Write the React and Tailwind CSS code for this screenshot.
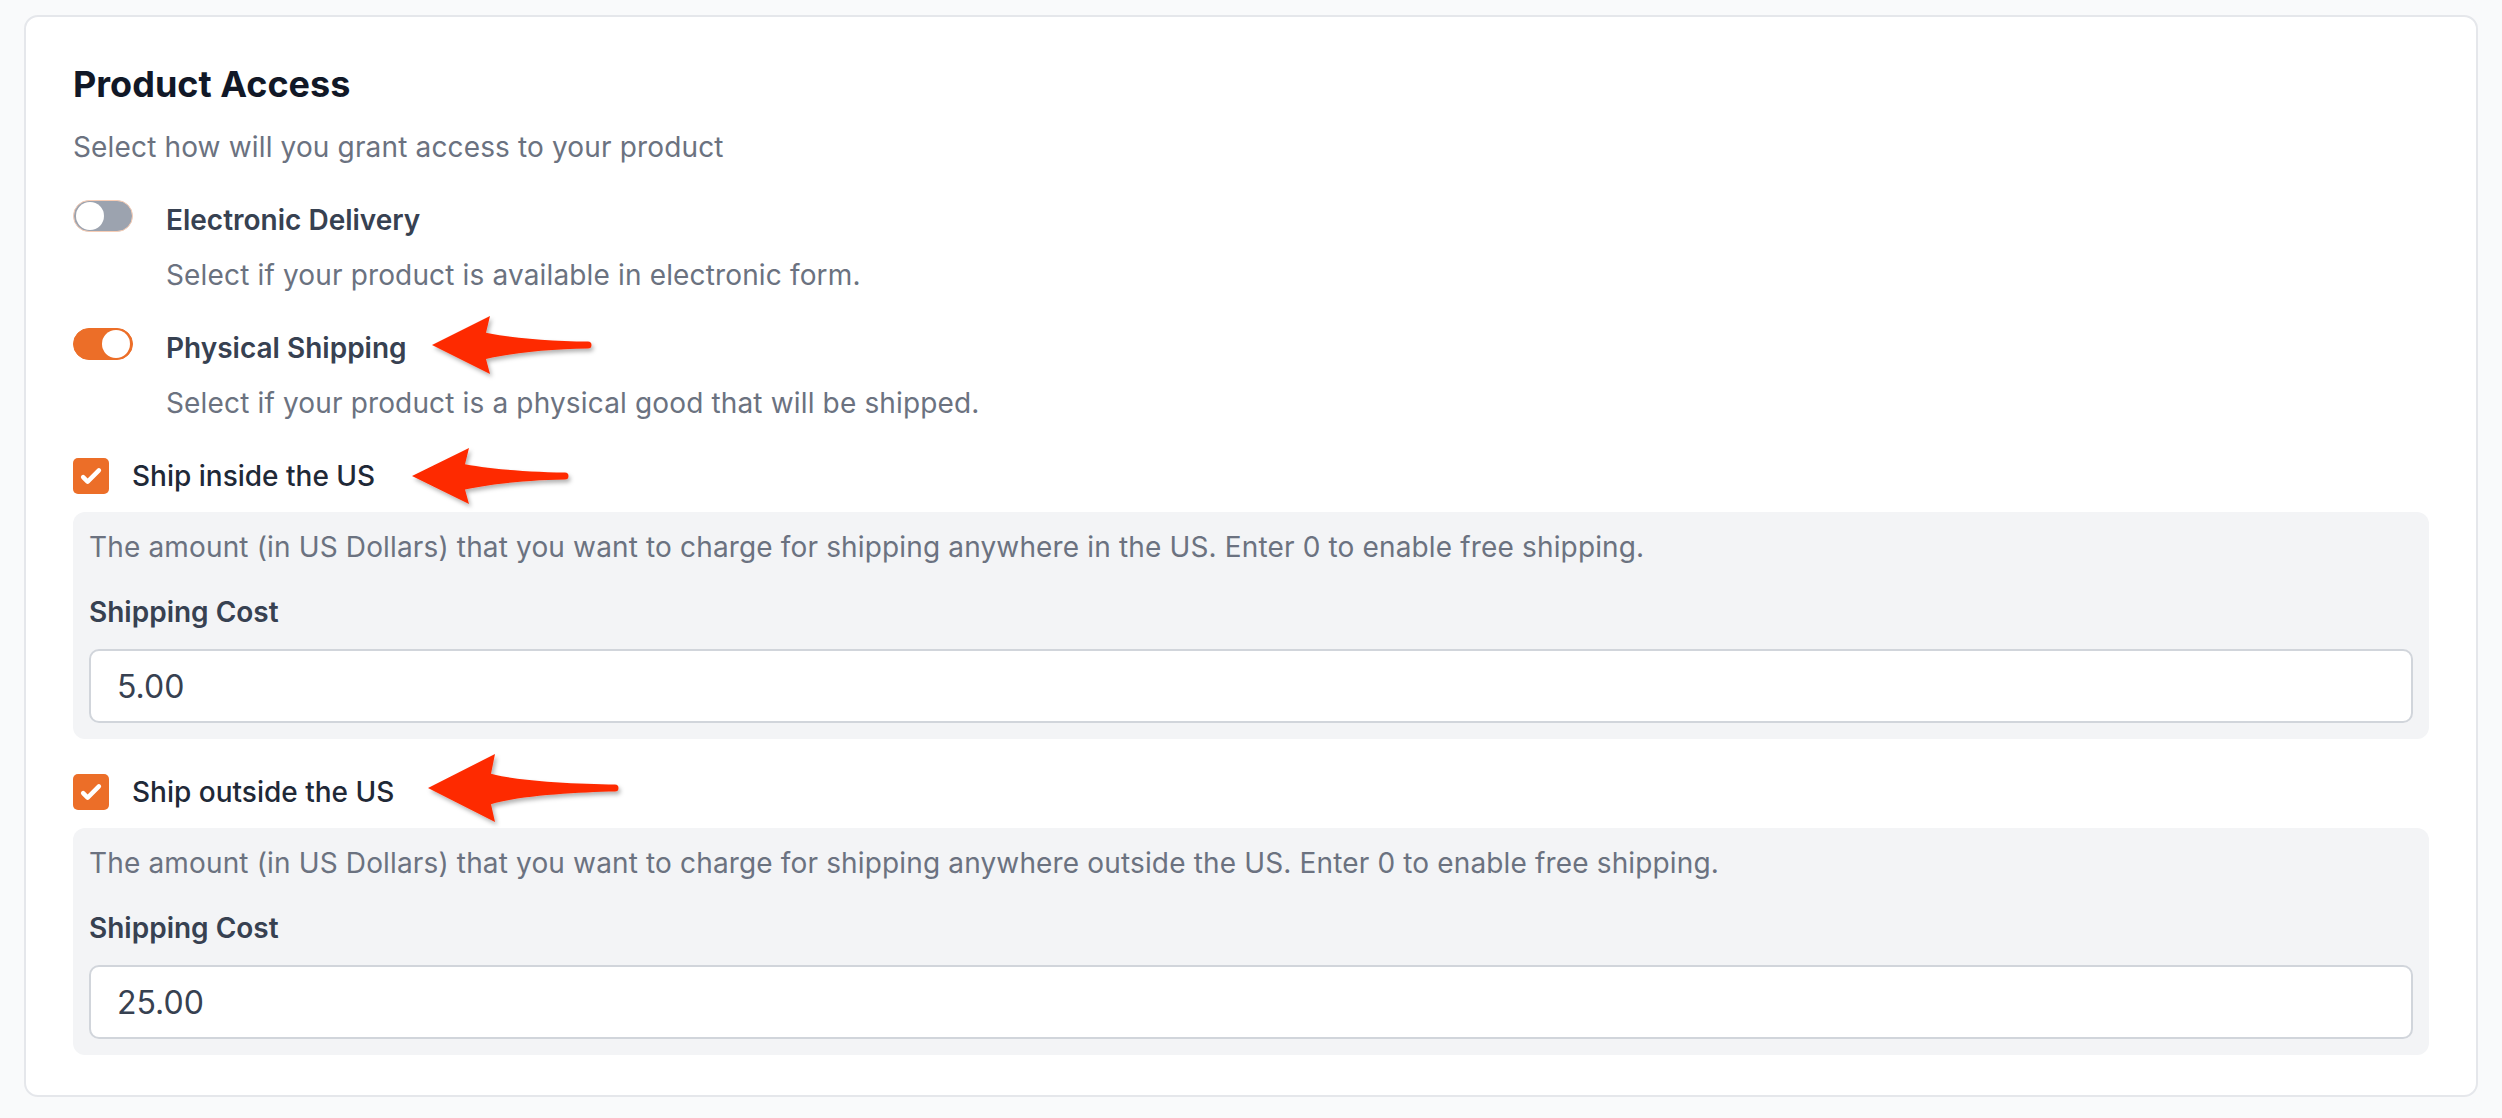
import React, { useState } from 'react';

const arrowPath = (x, y, len, h, hh) => {
  const nx = x + h - 4;
  const tx = x + len;
  return `M${x},${y} L${x + h},${y - hh} L${nx},${y - hh * 0.42} C${nx + 25},${y - 7} ${tx - 40},${y - 4} ${tx - 3},${y - 3.5} A3.5,3.5 0 0 1 ${tx - 3},${y + 3.5} C${tx - 40},${y + 4} ${nx + 25},${y + 8} ${nx},${y + hh * 0.48} L${x + h},${y + hh} Z`;
};

const Toggle = ({ on, onClick }) => (
  <button
    onClick={onClick}
    className={
      on
        ? 'relative flex items-center justify-end shrink-0 w-[60px] h-[32px] rounded-full bg-[#ec6e28] border border-[#ec6e28] px-[2px]'
        : 'relative flex items-center justify-start shrink-0 w-[60px] h-[32px] rounded-full bg-[#9ca3af] border border-[#f7cdb5] px-[2px]'
    }
  >
    <span className="block w-[28px] h-[28px] rounded-full bg-white" />
  </button>
);

const Checkbox = ({ checked, onClick }) => (
  <button
    onClick={onClick}
    className={
      checked
        ? 'flex items-center justify-center shrink-0 w-[36px] h-[36px] rounded-[5px] bg-[#ec6e28]'
        : 'flex items-center justify-center shrink-0 w-[36px] h-[36px] rounded-[5px] bg-white border-2 border-[#d1d5db]'
    }
  >
    {checked && (
      <svg viewBox="0 0 16 16" className="w-[36px] h-[36px]" fill="#ffffff">
        <path d="M12.207 4.793a1 1 0 010 1.414l-5 5a1 1 0 01-1.414 0l-2-2a1 1 0 011.414-1.414L6.5 9.086l4.293-4.293a1 1 0 011.414 0z" />
      </svg>
    )}
  </button>
);

const ShippingBox = ({ text, value }) => (
  <div className="mt-[16px] bg-[#f3f4f6] rounded-[12px] px-[16px] pt-[15px] pb-[16px]">
    <p className="text-[28px] leading-[40px] tracking-[0.15px] text-[#6b7280]">{text}</p>
    <p className="mt-[25px] text-[28px] leading-[40px] font-semibold text-[#374151]">Shipping Cost</p>
    <input
      readOnly
      value={value}
      className="mt-[17px] block w-full h-[74px] bg-white border-2 border-[#d1d5db] rounded-[10px] pl-[26px] text-[32px] leading-[48px] text-[#374151] outline-none"
    />
  </div>
);

export default function App() {
  const [electronic, setElectronic] = useState(false);
  const [physical, setPhysical] = useState(true);
  const [inside, setInside] = useState(true);
  const [outside, setOutside] = useState(true);

  return (
    <div className="relative min-h-screen bg-[#f9fafb] pt-[15px] px-[24px] pb-[21px] font-[Inter,'Liberation_Sans',sans-serif]">
      <div className="bg-white border-2 border-[#e5e7eb] rounded-[14px] pl-[47px] pr-[47px] pt-[43px] pb-[40px]">
        <h2 className="text-[36px] leading-[48px] font-bold text-[#111827]">Product Access</h2>
        <p className="mt-[19px] text-[28px] leading-[40px] tracking-[0.15px] text-[#6b7280]">
          Select how will you grant access to your product
        </p>

        {/* Electronic Delivery */}
        <div className="mt-[33px] flex items-start gap-[33px]">
          <Toggle on={electronic} onClick={() => setElectronic(!electronic)} />
          <div>
            <p className="text-[28px] leading-[40px] font-semibold text-[#374151]">Electronic Delivery</p>
            <p className="mt-[15px] text-[28px] leading-[40px] tracking-[0.15px] text-[#6b7280]">
              Select if your product is available in electronic form.
            </p>
          </div>
        </div>

        {/* Physical Shipping */}
        <div className="mt-[33px] flex items-start gap-[33px]">
          <Toggle on={physical} onClick={() => setPhysical(!physical)} />
          <div>
            <p className="text-[28px] leading-[40px] font-semibold text-[#374151]">Physical Shipping</p>
            <p className="mt-[15px] text-[28px] leading-[40px] tracking-[0.15px] text-[#6b7280]">
              Select if your product is a physical good that will be shipped.
            </p>
          </div>
        </div>

        {/* Ship inside */}
        <div className="mt-[33px] flex items-center gap-[23px]">
          <Checkbox checked={inside} onClick={() => setInside(!inside)} />
          <span className="text-[28px] leading-[40px] font-medium text-[#1f2937]">Ship inside the US</span>
        </div>
        {inside && (
          <ShippingBox
            text="The amount (in US Dollars) that you want to charge for shipping anywhere in the US. Enter 0 to enable free shipping."
            value="5.00"
          />
        )}

        {/* Ship outside */}
        <div className="mt-[33px] flex items-center gap-[23px]">
          <Checkbox checked={outside} onClick={() => setOutside(!outside)} />
          <span className="text-[28px] leading-[40px] font-medium text-[#1f2937]">Ship outside the US</span>
        </div>
        {outside && (
          <ShippingBox
            text="The amount (in US Dollars) that you want to charge for shipping anywhere outside the US. Enter 0 to enable free shipping."
            value="25.00"
          />
        )}
      </div>

      {/* annotation arrows */}
      <svg className="absolute inset-0 w-full h-full pointer-events-none" width="2502" height="1118">
        <defs>
          <filter id="arrowShadow" x="-10%" y="-30%" width="130%" height="170%">
            <feDropShadow dx="2" dy="3" stdDeviation="2" floodColor="#000000" floodOpacity="0.3" />
          </filter>
        </defs>
        <g fill="#fe2b00" filter="url(#arrowShadow)">
          <path d={arrowPath(432, 345, 159, 58, 29)} />
          <path d={arrowPath(412, 476, 156, 57, 28)} />
          <path d={arrowPath(428, 788, 190, 67, 34)} />
        </g>
      </svg>
    </div>
  );
}
